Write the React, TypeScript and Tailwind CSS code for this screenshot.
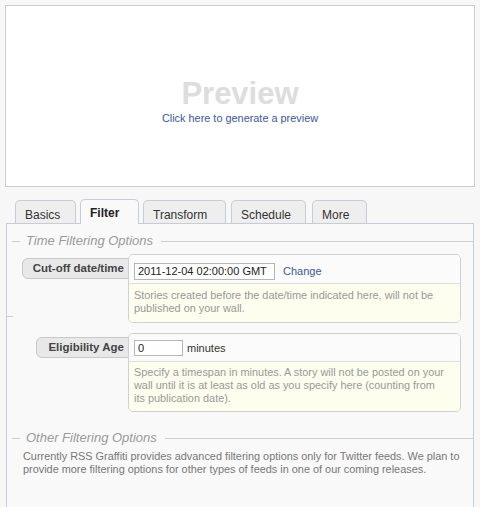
import React from "react";

const font = { fontFamily: '"Liberation Sans", Arial, sans-serif' };

function Legend({ text }: { text: string }) {
  return (
    <div className="flex items-center h-[16px]">
      <div className="ml-[5px] w-[8px] h-px bg-[#cfcfcf]" />
      <div className="ml-[6px] text-[13px] leading-[16px] italic text-[#9a9a9a] whitespace-nowrap">{text}</div>
      <div className="ml-[8px] flex-1 h-px bg-[#cfcfcf]" />
    </div>
  );
}

function Tab({ label, w, ml, active }: { label: string; w: string; ml: string; active?: boolean }) {
  if (active) {
    return (
      <div
        className={`${ml} ${w} h-[25px] mb-[-1px] rounded-t-[5px] border border-b-0 border-[#c5cdd9] bg-[#f9f9f9] pl-[9px] pt-[6px] text-[12px] leading-[14px] font-bold text-[#222]`}
      >
        {label}
      </div>
    );
  }
  return (
    <div
      className={`${ml} ${w} h-[23px] rounded-t-[5px] border border-b-0 border-[#c5cdd9] bg-[#eeeeee] pl-[9px] pt-[7px] text-[12px] leading-[14px] text-[#333]`}
    >
      {label}
    </div>
  );
}

export default function App() {
  return (
    <div className="w-[480px] h-[507px] overflow-hidden bg-[#f7f7f7]" style={font}>
      {/* Preview */}
      <div className="ml-[5px] mt-[5px] w-[470px] h-[182px] border border-[#cccccc] bg-white flex flex-col items-center pt-[72px]">
        <div className="text-[31px] leading-[31px] font-bold text-[#dddddd]">Preview</div>
        <div className="mt-[3px] text-[10.9px] leading-[13px] text-[#3b5998]">Click here to generate a preview</div>
      </div>

      {/* Tabs */}
      <div className="relative z-10 mt-[12px] h-[24px] flex items-end">
        <Tab label="Basics" ml="ml-[15px]" w="w-[61px]" />
        <Tab label="Filter" ml="ml-[4px]" w="w-[59px]" active />
        <Tab label="Transform" ml="ml-[4px]" w="w-[83px]" />
        <Tab label="Schedule" ml="ml-[5px]" w="w-[75px]" />
        <Tab label="More" ml="ml-[6px]" w="w-[55px]" />
      </div>

      {/* Panel */}
      <div className="ml-[6px] w-[468px] h-[300px] border border-b-0 border-[#c5cdd9] bg-[#f9f9f9] pt-[9px]">
        <Legend text="Time Filtering Options" />

        {/* Row 1 */}
        <div className="mt-[5px] flex">
          <div className="w-[121px] flex flex-col items-end">
            <div className="mt-[4px] mr-[-6px] h-[21px] rounded-[6px] border border-[#c8c8c8] bg-[#e8e8e8] pl-[10px] pr-[9px] text-[11.5px] leading-[19px] font-bold text-[#444] whitespace-nowrap">
              Cut-off date/time
            </div>
            <div className="mt-auto mb-[6px] self-start w-[6px] h-px bg-[#cfcfcf]" />
          </div>
          <div className="relative z-10 w-[333px] rounded-[5px] border border-[#d0d0d0] overflow-hidden">
            <div className="h-[28px] bg-[#fbfbfb] flex items-start">
              <div className="ml-[5px] mt-[8px] w-[141px] h-[17px] border border-[#b5b5b5] bg-white pl-[3px] text-[11px] leading-[15px] text-[#222] whitespace-nowrap">
                2011-12-04 02:00:00 GMT
              </div>
              <div className="ml-[8px] mt-[9px] text-[11px] leading-[14px] text-[#3b5998]">Change</div>
            </div>
            <div className="border-t border-[#dedede] bg-[#fefeee] pl-[5px] pr-[12px] pt-[5px] pb-[7px] text-[10.9px] leading-[13px] text-[#999]">
              Stories created before the date/time indicated here, will not be published on your wall.
            </div>
          </div>
        </div>

        {/* Row 2 */}
        <div className="mt-[10px] flex">
          <div className="w-[121px] flex flex-col items-end">
            <div className="mt-[4px] mr-[-6px] h-[21px] rounded-[6px] border border-[#c8c8c8] bg-[#e8e8e8] pl-[11px] pr-[9px] text-[11.5px] leading-[19px] font-bold text-[#444] whitespace-nowrap">
              Eligibility Age
            </div>
          </div>
          <div className="relative z-10 w-[333px] rounded-[5px] border border-[#d0d0d0] overflow-hidden">
            <div className="h-[27px] bg-[#fbfbfb] flex items-start">
              <div className="ml-[5px] mt-[6px] w-[49px] h-[16px] border border-[#b5b5b5] bg-white pl-[3px] text-[11px] leading-[14px] text-[#222]">
                0
              </div>
              <div className="ml-[4px] mt-[7px] text-[11px] leading-[14px] text-[#333]">minutes</div>
            </div>
            <div className="border-t border-[#dedede] bg-[#fefeee] pl-[5px] pr-[12px] pt-[4px] pb-[6px] text-[10.9px] leading-[13px] text-[#999]">
              Specify a timespan in minutes. A story will not be posted on your wall until it is at least as old as you specify here (counting from its publication date).
            </div>
          </div>
        </div>

        <div className="mt-[18px]">
          <Legend text="Other Filtering Options" />
        </div>
        <div className="mt-[4px] pl-[16px] pr-[6px] text-[10.9px] leading-[13px] text-[#777]">
          Currently RSS Graffiti provides advanced filtering options only for Twitter feeds. We plan to provide more filtering options for other types of feeds in one of our coming releases.
        </div>
      </div>
    </div>
  );
}
